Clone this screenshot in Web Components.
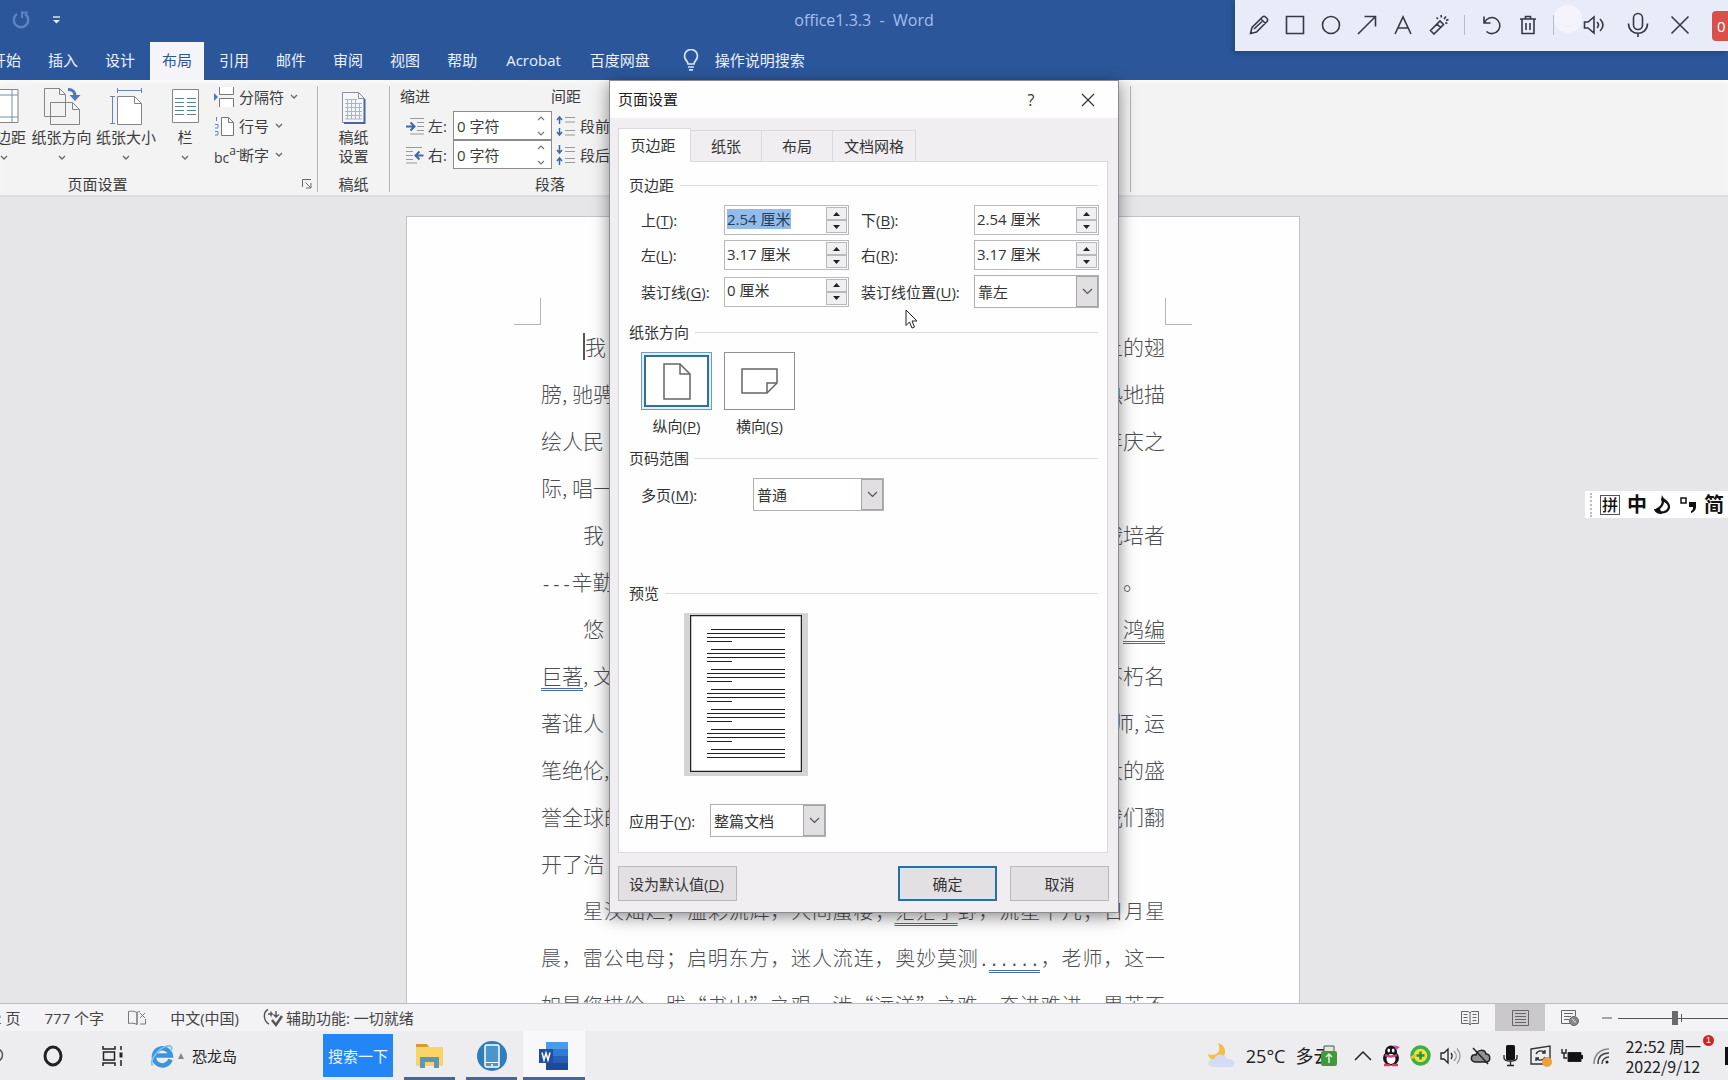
<!DOCTYPE html>
<html lang="zh-CN">
<head>
<meta charset="utf-8">
<title>office1.3.3 - Word</title>
<style>
  html, body { height: 100%; margin: 0; }
  body {
    overflow: hidden;
    font: 15px/20px "Open Sans", "Noto Sans CJK SC", sans-serif;
    color: #3c3c3c;
    background: #e6e6e8;
  }
</style>
</head>
<body>
<word-app></word-app>
<script>
const BASE = `
  *, *::before, *::after { box-sizing: border-box; }
  button, input, select { font: inherit; color: inherit; margin: 0; padding: 0; border: 0; background: none; border-radius: 0; }
  a { color: inherit; text-decoration: none; }
  svg { display: block; flex: none; fill: none; }
  :host { display: block; }
`;
function define(name, css, html, ready) {
  customElements.define(name, class extends HTMLElement {
    connectedCallback() {
      if (this.shadowRoot) return;
      const root = this.attachShadow({ mode: 'open' });
      const body = typeof html === 'function' ? html(this) : html;
      root.innerHTML = `<style>${BASE}${css}</style>${body}`;
      if (ready) ready(this, root);
    }
  });
}
const attr = (el, n, d = '') => el.getAttribute(n) ?? d;
const accel = el => attr(el, 'key') ? `${attr(el, 'label')}(<u>${attr(el, 'key')}</u>)` : attr(el, 'label');
const chevron = `<svg width="8" height="6" viewBox="0 0 8 6" stroke="#666" stroke-width="1.3"><path d="M1 1l3 3 3-3"/></svg>`;

/* ---------- title bar ---------- */
define('title-bar', `
  :host { height: 42px; padding-bottom: 2px; background: #2b579a; color: #a6bdf0; display: grid; grid-template-columns: 1fr auto 1fr; align-items: center; }
  .quick { display: flex; align-items: center; gap: 22px; padding-left: 11px; }
  h1 { font: inherit; font-size: 16px; margin: 0; white-space: pre; }
`, `
  <div class="quick">
    <button aria-label="撤消"><svg width="20" height="20" viewBox="0 0 20 20" stroke="#5f84c4" stroke-width="2.4"><path d="M6 4a7.200 7.200 0 1 0 8 0"/><path d="M11 8V2.500h6" stroke-width="2"/></svg></button>
    <button aria-label="自定义快速访问工具栏"><svg width="7" height="8" viewBox="0 0 7 8"><path d="M0 1h7" stroke="#e8eefc" stroke-width="1.4"/><path d="M0 4h7L3.500 7.500z" fill="#e8eefc"/></svg></button>
  </div>
  <h1>office1.3.3  -  Word</h1>
  <div></div>
`);

define('ribbon-tabs', `
  :host { height: 38px; background: #2b579a; color: #eaf1ff; }
  nav { display: flex; gap: 3px; height: 100%; margin-left: -21px; }
  a { display: flex; align-items: center; padding: 0 12px 2px; white-space: nowrap; }
  a.on { background: #f5f4f8; color: #2b579a; }
  a.wide { padding: 0 14px 2px; }
  a.tell { padding-left: 18px; gap: 16px; }
`, `
  <nav>
    <a href="#">开始</a><a href="#">插入</a><a href="#">设计</a><a href="#" class="on">布局</a><a href="#">引用</a>
    <a href="#">邮件</a><a href="#">审阅</a><a href="#">视图</a><a href="#">帮助</a><a href="#" class="wide">Acrobat</a><a href="#">百度网盘</a>
    <a href="#" class="tell"><svg width="16" height="22" viewBox="0 0 16 22" stroke="#d8e6ff" stroke-width="1.700"><path d="M5 15c0-3-3.500-4-3.500-8a6.500 6.500 0 0 1 13 0c0 4-3.500 5-3.500 8z"/><path d="M5 18h6M6 20.800h4"/></svg>操作说明搜索</a>
  </nav>
`);

/* ---------- ribbon ---------- */
const ICONS = {
  margins: `<svg width="37" height="38" viewBox="0 0 37 38"><path d="M5 2.500h28v33H5z" fill="#fff" stroke="#858585"/><path d="M11 2v34M27 2v34M5 8h28M5 30h28" stroke="#6f8fb8"/></svg>`,
  orient: `<svg width="38" height="38" viewBox="0 0 38 38" fill="#fff" stroke="#858585"><path d="M1.500 1.500h15l6 6v22h-21z"/><path d="M16.500 1.500v6h6"/><path d="M7.500 15.500h22l7 7v15h-29z"/><path d="M29.500 15.500v7h7"/><path d="M25 2.500c5 0 7 2 7 7" fill="none" stroke="#4f79b5" stroke-width="3"/><path d="M26.500 8h11L32 14z" fill="#4f79b5" stroke="none"/></svg>`,
  size: `<svg width="34" height="38" viewBox="0 0 34 38"><path d="M8.500 9.500h17l7 7v21h-24z" fill="#fff" stroke="#858585"/><path d="M25.500 9.500v7h7" stroke="#858585"/><path d="M8.500 3.500h24M8.500 1v5M32.500 1v5M3.500 9.500v27M1 9.500h5M1 36.500h5" stroke="#6286bd"/></svg>`,
  columns: `<svg width="27" height="38" viewBox="0 0 27 38"><path d="M.5 2.500h26v33H.5z" fill="#fff" stroke="#858585"/><path d="M3 11.500h9M3 15.500h9M3 19.500h9M3 23.500h9M3 27.500h9M15 11.500h9M15 15.500h9M15 19.500h9M15 23.500h9M15 27.500h9" stroke="#5b8294"/></svg>`,
  breaks: `<svg width="21" height="20" viewBox="0 0 21 20"><path d="M5.500 0v7.500h14V0M5.500 20v-8.500h14V20" fill="#fff" stroke="#777"/><path d="M0 6v8l4-4z" fill="#4f79b5"/></svg>`,
  lines: `<svg width="21" height="20" viewBox="0 0 21 20"><path d="M7.500 1.500h7l5 5v13h-12z" fill="#fff" stroke="#777"/><path d="M14.500 1.500v5h5" stroke="#777"/><path d="M2.500 1v4M1 8.500h3v3M1 12h3M1 15.500h3v3.500H1" stroke="#6286bd"/></svg>`,
  manuscript: `<svg width="26" height="34" viewBox="0 0 26 34"><path d="M1.500 1.500h16l6 6v24h-22z" fill="#f5f7fd" stroke="#8a8f9c"/><path d="M23.500 8v24H3" stroke="#4a64ac" stroke-width="2"/><path d="M17.500 1.500v6h6" stroke="#8a8f9c"/><path d="M4 8.500h12M4 12.500h17M4 16.500h17M4 20.500h17M4 24.500h17M4 28h17M6.500 8v20M10.500 8v20M14.500 8v20M18.500 12v16" stroke="#a9b3cc"/></svg>`,
  indL: `<svg width="19" height="18" viewBox="0 0 19 18"><path d="M5 1.500h14M12 5.500h7M12 9.500h7M12 13.500h7M5 17h14" stroke="#999"/><path d="M1 9.500h8M5.500 5.500l4 4-4 4" stroke="#41679f" stroke-width="2"/></svg>`,
  indR: `<svg width="19" height="18" viewBox="0 0 19 18"><path d="M1 1.500h16M1 5.500h7M1 9.500h7M1 13.500h7M1 17h11" stroke="#999"/><path d="M18.500 9.500h-8M14.500 5.500l-4 4 4 4" stroke="#41679f" stroke-width="2"/></svg>`,
  spB: `<svg width="20" height="22" viewBox="0 0 20 22"><path d="M9 2.500h10M9 7h10M9 15.500h10M9 20h10" stroke="#999" stroke-width="1.200"/><path d="M3.500 9V2M1 5l2.500-3L6 5M3.500 13v7M1 17l2.500 3L6 17" stroke="#41679f" stroke-width="1.500"/></svg>`,
  spA: `<svg width="20" height="22" viewBox="0 0 20 22"><path d="M9 3.500h10M9 7.500h10M9 14.500h10M9 18.500h10" stroke="#999" stroke-width="1.200"/><path d="M3.500 1v8M1 6l2.500 3L6 6M3.500 21v-7M1 17l2.500-3L6 17" stroke="#41679f" stroke-width="1.500"/></svg>`
};
define('big-button', `
  button { display: flex; flex-direction: column; align-items: center; white-space: nowrap; width: 100%; }
  span { margin-top: 2px; }
  .c { height: 18px; display: flex; align-items: center; }
`, el => `<button>${ICONS[attr(el, 'icon')]}<span>${attr(el, 'label')}</span><span class="c">${chevron}</span></button>`);

define('small-button', `
  button { display: flex; align-items: center; height: 29px; white-space: nowrap; }
  .i { width: 25px; display: flex; }
  .t { margin-right: 6px; }
  .ab { display: flex; line-height: 14px; font-size: 14px; }
  .ab span { padding-top: 7px; }
  .ab b { font-weight: 400; font-size: 12px; }
`, el => `<button><span class="i">${attr(el, 'icon') === 'hyphen' ? '<span class="ab"><span>bc</span><b>a-</b></span>' : ICONS[attr(el, 'icon')]}</span><span class="t">${attr(el, 'label')}</span>${chevron}</button>`);

define('indent-field', `
  label { display: flex; align-items: center; height: 29px; gap: 4px; }
  .box { display: flex; align-items: center; width: 99px; height: 29px; border: 1px solid #8d8d8d; background: #fff; margin-left: 2px; padding-right: 6px; }
  input { flex: 1; min-width: 0; padding-left: 3px; }
`, el => `<label>${ICONS[attr(el, 'icon')]}<span>${attr(el, 'label')}:</span><span class="box"><input value="0 字符">
  <svg width="8" height="22" viewBox="0 0 8 22" stroke="#777" stroke-width="1.200"><path d="M1 5l3-3 3 3M1 17l3 3 3-3"/></svg></span></label>`);

define('ribbon-group', `
  :host { display: grid; grid-template-rows: minmax(0, 1fr) 16px; border-right: 1px solid #b4b4b6; height: 106px; }
  footer { display: grid; grid-template-columns: 1fr auto 1fr; align-items: center; line-height: 16px; }
  footer span { grid-column: 2; }
  footer button { justify-self: end; margin-right: 5px; }
`, el => `<slot></slot><footer><span>${attr(el, 'label')}</span>${el.hasAttribute('launcher') ? `<button aria-label="${attr(el, 'label')}"><svg width="10" height="10" viewBox="0 0 10 10" stroke="#666"><path d="M.5 8V.5H9M3.500 3.500l5 5M9 4v5H4"/></svg></button>` : ''}</footer>`);

define('ribbon-bar', `
  :host { display: flex; height: 117px; padding-top: 6px; background: #f3f3f4; border-bottom: 2px solid #dedee0; overflow: hidden; box-shadow: inset 0 4px 4px -2px #fdfbff; }
  ribbon-group { flex: none; }
  .first { width: 440px; margin-left: -122px; }
  .row { display: flex; padding-left: 98px; }
  .row big-button { padding-top: 1px; }
  .w1 { width: 55px; } .w2 { width: 61px; } .w3 { width: 68px; } .w4 { width: 50px; }
  .stack { padding-left: 4px; display: grid; align-content: start; margin-top: -4px; }
  .ms { width: 72px; }
  .ms button { display: grid; align-content: start; justify-items: center; line-height: 19px; padding-top: 5px; gap: 3px; width: 100%; }
  .para { width: 741px; }
  .cols { display: flex; padding-left: 10px; gap: 4px; align-items: start; }
  .fields { padding-left: 5px; }
  .sp { display: flex; align-items: center; gap: 4px; height: 29px; white-space: nowrap; }
  h2 { font: inherit; margin: 0 0 0 -5px; height: 25px; line-height: 21px; }
`, `
  <ribbon-group class="first" label="页面设置" launcher>
    <div class="row">
      <big-button class="w1" icon="margins" label="页边距"></big-button>
      <big-button class="w2" icon="orient" label="纸张方向"></big-button>
      <big-button class="w3" icon="size" label="纸张大小"></big-button>
      <big-button class="w4" icon="columns" label="栏"></big-button>
      <div class="stack">
        <small-button icon="breaks" label="分隔符"></small-button>
        <small-button icon="lines" label="行号"></small-button>
        <small-button icon="hyphen" label="断字"></small-button>
      </div>
    </div>
  </ribbon-group>
  <ribbon-group class="ms" label="稿纸"><button>${ICONS.manuscript}<span>稿纸<br>设置</span></button></ribbon-group>
  <ribbon-group class="para" label="">
    <div class="cols">
      <div class="fields"><h2>缩进</h2><indent-field icon="indL" label="左"></indent-field><indent-field icon="indR" label="右"></indent-field></div>
      <div><h2>间距</h2><div class="sp">${ICONS.spB}段前:</div><div class="sp">${ICONS.spA}段后:</div></div>
    </div>
  </ribbon-group>
`, (el, root) => {
  root.querySelector('.para').shadowRoot.querySelector('footer').innerHTML = '<span style="grid-column:1;padding-left:145px">段落</span>';
});

/* ---------- screen annotation toolbar ---------- */
define('annotate-bar', `
  :host { position: absolute; top: 0; right: 0; display: flex; align-items: center; height: 51px; width: 493px; padding-left: 12px; background: #e8ebf8; box-shadow: -2px 2px 5px rgba(20,40,80,.4); overflow: hidden; }
  button, i { flex: none; display: flex; justify-content: center; width: 36px; margin-bottom: 2px; }
  button:first-child, .n { width: 24px; }
  svg { stroke: #353846; stroke-width: 1.600; }
  i { width: 1px; height: 20px; background: #b9bccb; margin-left: 7px; }
  .halo { width: 28px; height: 28px; border-radius: 50%; background: #f4f5fc; margin: 0 0 14px; }
  .rec { background: #d9504b; color: #fff; width: 40px; height: 30px; align-items: center; justify-content: flex-start; border-radius: 4px; padding-left: 5px; margin: 0; }
  .w { width: 42px; } .g { margin-left: 11px; }
`, `
  <button aria-label="画笔" class="n"><svg width="20" height="20" viewBox="0 0 20 20"><path d="M1.500 18.500l1.500-6L13.500 2c1-1 2-1 3 0l1.500 1.500c1 1 .8 2 0 3L7.500 17zM12 4l4.500 4.500M5 14L13 6.500"/></svg></button>
  <button aria-label="矩形" style="margin-left:6px"><svg width="20" height="20" viewBox="0 0 20 20"><path d="M1.500 1.500h17v17h-17z"/></svg></button>
  <button aria-label="圆"><svg width="20" height="20" viewBox="0 0 20 20"><circle cx="10" cy="10" r="8.500"/></svg></button>
  <button aria-label="箭头"><svg width="20" height="20" viewBox="0 0 20 20"><path d="M1 19L18 2M7.500 1.500h11v10"/></svg></button>
  <button aria-label="文字"><svg width="20" height="20" viewBox="0 0 20 20"><path d="M2 19L10 2l8 17M5 13h10"/></svg></button>
  <button aria-label="荧光笔"><svg width="20" height="20" viewBox="0 0 20 20"><path d="M1.500 15.500L11 6l3.500 3.500L5 19zM8 9l3.500 3.500M12 0l.5 2.500M17 1.500l-2 2.500M18.500 8h-2.500M19.500 4.500L17 5.500M7.500 2.500L9 4"/></svg></button>
  <i></i>
  <button aria-label="撤销" style="margin-left:9px"><svg width="20" height="20" viewBox="0 0 20 20"><path d="M2 1.500V8h6.500M2.500 7.500a8 8 0 1 1 2 9"/></svg></button>
  <button aria-label="清空"><svg width="18" height="20" viewBox="0 0 18 20"><path d="M1 4h16M6.500 3.500v-2h5v2M3 4v14.500h12V4M7 8v7M11 8v7"/></svg></button>
  <i></i><i class="halo"></i>
  <button aria-label="声音" class="n"><svg width="22" height="22" viewBox="0 0 22 22"><path d="M1.500 8v6H5l6 5V3L5 8zM14 8c2 2 2 4 0 6M17 5c4 4 4 8 0 12"/></svg></button>
  <button aria-label="麦克风" class="w" style="margin-left:11px"><svg width="22" height="26" viewBox="0 0 22 26"><rect x="6.500" y="1.500" width="9" height="16" rx="4.500"/><path d="M1.500 11.500c0 13 19 13 19 0M11 21.500V25"/></svg></button>
  <button aria-label="关闭" class="w"><svg width="20" height="20" viewBox="0 0 20 20"><path d="M1.500 1.500l17 17M18.500 1.500l-17 17"/></svg></button>
  <button class="rec g">0</button>
`);

/* ---------- document ---------- */
define('doc-line', `
  :host { display: flex; justify-content: space-between; height: 47px; line-height: 47px; font-size: 21px; white-space: nowrap; }
  :host([indent]) { padding-left: 42px; }
  :host([full]) { display: block; font-size: 20px; text-align: justify; text-align-last: justify; }
`, `<slot></slot>`);
define('doc-page', `
  :host { width: 894px; max-width: 100%; margin: 19px auto 0; padding: 81px 134px 0; background: #fefefe; border: 1px solid #c3c3c5; color: #4e4e52; font-weight: 300; font-family: "Noto Sans CJK SC", sans-serif; flex: none; }
  .marks { display: flex; justify-content: space-between; margin: 0 -27px -2px; height: 27px; }
  .marks i { width: 27px; border-bottom: 1px solid #b5b5b5; border-right: 1px solid #b5b5b5; }
  .marks i + i { border-right: 0; border-left: 1px solid #b5b5b5; }
  .d { text-decoration: underline double #4a6ca8 1px; text-underline-offset: 4px; }
  .m { font-family: "Liberation Mono", monospace; font-size: 17px; }
  .caret { border-left: 2px solid #555; padding: 3px 0; line-height: 21px; align-self: center; }
`, `
  <div class="marks"><i></i><i></i></div>
  <doc-line indent><span class="caret">我</span><span>上的翅</span></doc-line>
  <doc-line><span>膀, 驰骋</span><span>热地描</span></doc-line>
  <doc-line><span>绘人民</span><span>年庆之</span></doc-line>
  <doc-line><span>际, 唱一</span></doc-line>
  <doc-line indent><span>我</span><span>栽培者</span></doc-line>
  <doc-line><span><span class="m">---</span>辛勤</span><span>。&emsp;</span></doc-line>
  <doc-line indent><span>悠</span><span class="d">鸿编</span></doc-line>
  <doc-line><span><span class="d">巨著</span>, 文</span><span>不朽名</span></doc-line>
  <doc-line><span>著谁人</span><span>师, 运</span></doc-line>
  <doc-line><span>笔绝伦,</span><span>大的盛</span></doc-line>
  <doc-line><span>誉全球的</span><span>我们翻</span></doc-line>
  <doc-line><span>开了浩</span></doc-line>
  <doc-line indent full>星汉灿烂，溢彩流辉，人间蜃楼；<span class="d">茫茫宇</span>野，流星下凡；日月星</doc-line>
  <doc-line full>晨，雷公电母；启明东方，迷人流连，奥妙莫测<span class="m">.<span class="d">.....</span></span>，老师，这一</doc-line>
  <doc-line full>如是您描绘，跋“书山”之艰，涉“远洋”之难，奋进难进，累苦不</doc-line>
`);

/* ---------- dialog ---------- */
define('group-head', `
  :host { display: flex; align-items: center; gap: 6px; height: 24px; }
  :host::after { content: ""; flex: 1; height: 1px; background: #dcdcdf; }
`, `<slot></slot>`);
const FIELD = `
  label { white-space: nowrap; width: var(--label, 83px); flex: none; }
  u { text-underline-offset: 2px; }
  :host { display: flex; align-items: center; }
`;
define('spin-field', FIELD + `
  .box { display: flex; height: 30px; width: 125px; border: 1px solid #b9b9bc; background: #fff; padding: 1px; }
  input { flex: 1; min-width: 0; padding: 0 0 3px 1px; outline: 0; color: #333; }
  input::selection { background: #93bde8; color: #24405e; }
  .btns { display: grid; width: 21px; }
  .btns button { display: flex; align-items: center; justify-content: center; background: #f0eff1; border: 1px solid #b9b9bc; }
`, el => `<label for="f">${accel(el)}:</label><div class="box"><input id="f" value="${attr(el, 'value')}">
  <div class="btns"><button aria-label="增加"><svg width="7" height="4" viewBox="0 0 7 4"><path d="M0 4L3.500 0 7 4z" fill="#222"/></svg></button>
  <button aria-label="减少"><svg width="7" height="4" viewBox="0 0 7 4"><path d="M0 0h7L3.500 4z" fill="#222"/></svg></button></div></div>`,
(el, root) => { if (el.hasAttribute('selected')) { const i = root.querySelector('input'); i.focus(); i.select(); } });
define('combo-field', FIELD + `
  .box { display: grid; height: 33px; width: var(--box, 125px); border: 1px solid #b0b0b3; background: #fff; }
  select { grid-area: 1/1; appearance: none; padding: 0 26px 0 3px; outline: 0; color: #333; }
  .arrow { grid-area: 1/1; justify-self: end; width: 22px; display: flex; align-items: center; justify-content: center; background: #e1dfe2; border: 1px solid #a5a5a8; pointer-events: none; }
`, el => `<label for="f">${accel(el)}:</label><div class="box"><select id="f"><option>${attr(el, 'value')}</option></select>
  <span class="arrow"><svg width="11" height="7" viewBox="0 0 11 7" stroke="#555" stroke-width="1.200"><path d="M1 1l4.500 4.500L10 1"/></svg></span></div>`);
define('orient-option', `
  :host { width: 71px; }
  button { display: grid; justify-items: center; gap: 4px; width: 100%; line-height: 24px; }
  .pic { width: 71px; height: 58px; display: flex; align-items: center; justify-content: center; border: 1px solid #8f8f93; background: #fff; }
  :host([on]) .pic { border-color: #6f9db8; box-shadow: inset 0 0 0 2px #d9f2ff, inset 0 0 0 4px #33708f; }
`, el => `<button><span class="pic">${el.hasAttribute('landscape')
  ? '<svg width="37" height="26" viewBox="0 0 37 26" fill="#f7f7f7" stroke="#666" stroke-width="1.500"><path d="M1 1h35v14L26 25H1z"/><path d="M26 25V15h10"/></svg>'
  : '<svg width="28" height="37" viewBox="0 0 28 37" fill="#f7f7f7" stroke="#666" stroke-width="1.500"><path d="M1 1h16l10 10v25H1z"/><path d="M17 1v10h10"/></svg>'}</span><span>${accel(el)}</span></button>`);
define('page-preview', `
  :host { width: 124px; height: 163px; background: #d4d4d6; padding: 2px 6px; }
`, () => {
  let d = '';
  for (let g = 0; g < 7; g++) {
    const y = 14.5 + g * 20;
    d += `M21 ${y}h74M17 ${y + 4}h78M17 ${y + 8}h78`;
    if (g < 6) d += `M17 ${y + 12}h25`;
  }
  return `<svg width="112" height="157" viewBox="0 0 112 157"><path d="M.5.500h111v156H.5z" fill="#fff" stroke="#222" stroke-width="1.500"/><path d="${d}" stroke="#222"/></svg>`;
});

define('page-setup-dialog', `
  :host { position: absolute; top: 80px; left: 0; right: 0; margin: 0 auto; width: 510px; background: #f0eef1; border: 1px solid #8c8c90; box-shadow: 0 4px 16px rgba(0,0,0,.45); color: #333; }
  header { display: flex; align-items: center; height: 37px; background: #fefefe; padding: 0 8px; }
  header b { font-weight: 400; flex: 1; color: #222; padding-bottom: 1px; }
  header button { width: 44px; height: 36px; display: flex; align-items: center; justify-content: center; font-size: 16px; margin-left: 13px; }
  main { padding: 10px 9px 11px 8px; }
  .tabs { display: flex; align-items: end; height: 33px; }
  .tabs button { height: 31px; border: 1px solid #dad9dc; border-width: 1px 1px 0 0; }
  .tabs .on { width: 73px; height: 34px; margin-bottom: -1px; background: #fefefe; border-left-width: 1px; padding: 0 3px 2px 0; position: relative; }
  .t1 { width: 71px; } .t2 { width: 71px; } .t3 { width: 83px; }
  section { background: #fefefe; border: 1px solid #dad9dc; padding: 11px 9px 15px 10px; margin-right: 1px; }
  .grid { display: grid; grid-template-columns: auto auto; justify-content: space-between; gap: 5px 12px; margin: 8px 0 12px; padding-left: 12px; }
  .r { --label: 113px; }
  .orient { display: flex; gap: 12px; margin: 8px 0; padding-left: 12px; }
  .multi { --label: 112px; --box: 131px; margin: 8px 0 70px; padding-left: 12px; }
  page-preview { margin: 8px 0 28px 55px; }
  .apply { --label: 81px; --box: 116px; }
  .foot { display: flex; gap: 13px; margin-top: 13px; }
  .foot button { width: 99px; height: 35px; background: #e2e0e3; border: 1px solid #b9b8bb; }
  .foot .def { width: 119px; margin-right: auto; padding-right: 2px; }
  .foot .ok { border: 2px solid #2f6f9f; box-shadow: inset 0 0 0 1px #cfeaff; }
`, `
  <header><b>页面设置</b><button aria-label="帮助">?</button><button aria-label="关闭"><svg width="14" height="14" viewBox="0 0 14 14" stroke="#333" stroke-width="1.200"><path d="M1 1l12 12M13 1L1 13"/></svg></button></header>
  <main>
    <div class="tabs"><button class="on">页边距</button><button class="t1">纸张</button><button class="t2">布局</button><button class="t3">文档网格</button></div>
    <section>
      <group-head>页边距</group-head>
      <div class="grid">
        <spin-field label="上" key="T" value="2.54 厘米" selected></spin-field>
        <spin-field class="r" label="下" key="B" value="2.54 厘米"></spin-field>
        <spin-field label="左" key="L" value="3.17 厘米"></spin-field>
        <spin-field class="r" label="右" key="R" value="3.17 厘米"></spin-field>
        <spin-field label="装订线" key="G" value="0 厘米"></spin-field>
        <combo-field class="r" label="装订线位置" key="U" value="靠左"></combo-field>
      </div>
      <group-head>纸张方向</group-head>
      <div class="orient"><orient-option on label="纵向" key="P"></orient-option><orient-option landscape label="横向" key="S"></orient-option></div>
      <group-head>页码范围</group-head>
      <combo-field class="multi" label="多页" key="M" value="普通"></combo-field>
      <group-head>预览</group-head>
      <page-preview></page-preview>
      <combo-field class="apply" label="应用于" key="Y" value="整篇文档"></combo-field>
    </section>
    <div class="foot"><button class="def">设为默认值(<u>D</u>)</button><button class="ok">确定</button><button>取消</button></div>
  </main>
`);

/* ---------- floating pieces ---------- */
define('ime-bar', `
  :host { position: absolute; right: 0; top: 491px; width: 143px; height: 27px; background: #fff; display: flex; align-items: center; gap: 7px; padding-left: 5px; color: #111; font-weight: 700; font-size: 20px; line-height: 26px; }
  i { width: 3px; height: 24px; border-left: 2px dotted #bbb; }
  .pin { border: 1px solid #555; font-size: 16px; line-height: 18px; width: 20px; height: 20px; text-align: center; font-weight: 500; }
`, `<i></i><span class="pin">拼</span><span>中</span>
  <svg width="18" height="20" viewBox="0 0 18 20"><path d="M8 4c2 4 0 8-6 11 4 4 12 3 13-3 0-3-2-5-5-7" fill="#fff" stroke="#111" stroke-width="2.200"/><path d="M8 0c1 4 5 4 6 9l-4-2-3-2zM0 14h6l2 5c-4 0-7-1-8-5z" fill="#111"/></svg>
  <svg width="18" height="18" viewBox="0 0 18 18"><rect x="2" y="2" width="5" height="5" stroke="#111" stroke-width="1.500"/><path d="M10 6h7v5c0 3-2 5-5 6v-2c2-1 2-2 2-4h-4z" fill="#111"/></svg><span>简</span>`);
define('mouse-pointer', `:host { position: absolute; left: 905px; top: 309px; }`,
  `<svg width="13" height="20" viewBox="0 0 13 20"><path d="M1 1v15.500l3.500-3.500 2.500 6 2.500-1-2.500-6h5z" fill="#fff" stroke="#222"/></svg>`);

/* ---------- status bar ---------- */
define('status-bar', `
  :host { display: flex; align-items: center; height: 27px; background: #f3f2f4; box-shadow: 0 -1px 0 #bcbcc0; white-space: nowrap; flex: none; position: relative; color: #444; }
  .l { display: flex; align-items: center; gap: 24px; margin-left: -7px; flex: 1; }
  .a { display: flex; align-items: center; gap: 3px; }
  button { display: flex; align-items: center; justify-content: center; width: 50px; height: 27px; }
  .on { background: #cac8cb; }
  .zoom { display: flex; align-items: center; width: 133px; overflow: hidden; }
  input { appearance: none; width: 138px; height: 16px; flex: none; margin-left: 6px; background: linear-gradient(#555, #555) 0 8px/100% 1px no-repeat, linear-gradient(#555, #555) 63px 4px/1px 8px no-repeat; }
  input::-webkit-slider-thumb { appearance: none; width: 6px; height: 14px; background: #6a6a6c; }
`, `
  <div class="l"><span>2 页</span><span>777 个字</span>
    <svg width="18" height="16" viewBox="0 0 18 16" stroke="#777"><path d="M9 2.500C6 .8 3 1 .5 1.500v12c3-.5 6-.5 8.500 1zM9 14.500V2.500c1-.8 2-1 3-1M12 14h5.500V9M12 3l5 5M17 3l-5 5"/></svg>
    <span>中文(中国)</span>
    <span class="a"><svg width="20" height="20" viewBox="0 0 20 20" stroke="#555" stroke-width="1.400"><path d="M5 1.500C0 4 0 13 6 16M8 3.500v5M5 6h5M13 3v6M10.500 6.500l2.500 2.500 3-2.500"/><path d="M9 12l4 5 6-9" stroke-width="2.500"/></svg>辅助功能: 一切就绪</span></div>
  <button aria-label="阅读视图"><svg width="18" height="16" viewBox="0 0 18 16" stroke="#666"><path d="M.5 1.500h7L9 3l1.500-1.500h7v12h-7L9 15l-1.500-1.500h-7zM9 3v12M2.500 4.500h4M2.500 7.500h4M2.500 10.500h4M11.500 4.500h4M11.500 7.500h4M11.500 10.500h4"/></svg></button>
  <button class="on" aria-label="页面视图"><svg width="17" height="16" viewBox="0 0 17 16" stroke="#666"><path d="M.5.500h16v15H.5zM3 3.500h11M3 6.500h11M3 9.500h11M3 12.500h11"/></svg></button>
  <button aria-label="Web 版式"><svg width="18" height="16" viewBox="0 0 18 16" stroke="#666"><path d="M9 13.500H.5V.5h14V6M3 3.500h9M3 6.500h7M3 9.500h5"/><circle cx="13" cy="11" r="4.500" fill="#888"/><path d="M11 9c2 0 1 3 4 3" stroke="#eee"/></svg></button>
  <div class="zoom"><svg width="10" height="2" viewBox="0 0 10 2" stroke="#555" style="margin-left:7px"><path d="M0 1h10"/></svg><input type="range" aria-label="显示比例" min="0" max="100" value="41"></div>
`);

/* ---------- task bar ---------- */
define('task-bar', `
  :host { display: flex; align-items: center; height: 49px; background: #ededf0; color: #222; white-space: nowrap; flex: none; overflow: hidden; }
  .l, .r { display: flex; align-items: center; height: 100%; }
  .l { flex: 1; }
  button, a { display: flex; align-items: center; justify-content: center; flex: none; }
  .ie { gap: 4px; margin-left: 27px; } .ie span { margin-left: 4px; }
  .go { width: 70px; height: 43px; background: #2486f6; color: #eaf5ff; margin: 0 11px 0 86px; }
  .app { width: 51px; height: 49px; border-bottom: 3px solid #42689b; margin-right: 11px; padding-top: 3px; }
  .app.on { width: 62px; background: #f8f8fb; margin-left: -5px; }
  .wt { font-size: 18px; gap: 10px; }
  .usb { margin-left: -11px; }
  .tray { display: flex; align-items: center; gap: 9px; margin-left: 16px; }
  time { font-size: 16px; line-height: 20px; margin-left: 15px; font-family: "Noto Sans CJK SC", sans-serif; }
  .dot { width: 11px; height: 11px; border-radius: 50%; background: #d02328; color: #fff; font: 9px/11px "Liberation Sans", sans-serif; text-align: center; align-self: start; margin: 4px 11px 0 2px; }
  .nt { width: 3px; height: 18px; background: #111; }
`, `
  <div class="l">
    <svg width="4" height="16" viewBox="0 0 4 16" stroke="#555" stroke-width="1.500"><circle cx="-4" cy="7" r="6.500"/></svg>
    <button aria-label="Cortana" style="margin-left:39px"><svg width="20" height="22" viewBox="0 0 20 22" stroke="#222" stroke-width="3"><ellipse cx="10" cy="11" rx="8" ry="9"/></svg></button>
    <button aria-label="任务视图" style="margin-left:39px"><svg width="21" height="20" viewBox="0 0 21 20" stroke="#222" stroke-width="1.500"><path d="M1 0v3h12V0M1 20v-3h12v3M1.500 6h11v8h-11zM19 0v4M19 14v6"/><path d="M19 6.500v5" stroke-width="3"/></svg></button>
    <button class="ie"><svg width="24" height="24" viewBox="0 0 24 24"><path d="M20.500 15.500A8.500 8.500 0 1 1 20.800 11.500H6" stroke="#3b95dd" stroke-width="4.500"/><path d="M2.500 21.500C-1 16 9 4 17 2c5-1 5 2 4.500 4" stroke="#7cc0ee" stroke-width="1.800"/></svg><svg width="6" height="6" viewBox="0 0 6 6"><path d="M3 0l3 6H0z" fill="#888"/></svg><span>恐龙岛</span></button>
    <button class="go">搜索一下</button>
    <button class="app" aria-label="文件资源管理器"><svg width="30" height="26" viewBox="0 0 30 26"><path d="M1 1h11l2 3h-13z" fill="#d99a35"/><path d="M1 4h27v19H1z" fill="#f9d567"/><path d="M5 25V14h19v11h-5v-6h-9v6z" fill="#5d97b5"/></svg></button>
    <button class="app" aria-label="手机助手"><svg width="30" height="30" viewBox="0 0 30 30"><circle cx="15" cy="15" r="15" fill="#2f7dbd"/><rect x="8" y="4" width="14" height="22" rx="2" stroke="#fff" stroke-width="1.500" fill="#4e94cc"/><path d="M8 21.500h14" stroke="#fff"/><circle cx="15" cy="24" r="1" fill="#fff"/></svg></button>
    <button class="app on" aria-label="Word"><svg width="30" height="28" viewBox="0 0 30 28"><path d="M7 0h22v7H7z" fill="#4a9be8"/><path d="M7 7h22v7H7z" fill="#2f7bd3"/><path d="M7 14h22v7H7z" fill="#245fb8"/><path d="M7 21h22v7H7z" fill="#1c4a98"/><rect y="7" width="14" height="14" fill="#1f4f9e"/><path d="M3 10.500l2 7.500 2-7 2 7 2-7.500" stroke="#fff" stroke-width="1.500"/></svg></button>
  </div>
  <div class="r">
    <a href="#" class="wt"><svg width="30" height="28" viewBox="0 0 30 28"><path d="M12 1c4 9-2 14-10 11 1 8 15 9 17-1 1-5-3-9-7-10z" fill="#f3bd4c"/><path d="M7 25c-8-1-5-9 1-8 2-6 11-6 13 0 9-1 10 8 3 8z" fill="#d3dcf2"/></svg><span>25°C</span><span>多云</span></a>
    <svg class="usb" width="18" height="22" viewBox="0 0 18 22"><path d="M4 1h10v6H4z" fill="#dfe9df" stroke="#555"/><rect x="1" y="6" width="16" height="15" rx="2" fill="#3e9a3d"/><path d="M9 9v9M6 12l3-3 3 3" stroke="#dff5d8" stroke-width="1.500"/></svg>
    <div class="tray">
      <svg width="18" height="11" viewBox="0 0 18 11" stroke="#222" stroke-width="1.500"><path d="M1 10l8-8 8 8"/></svg>
      <svg width="20" height="22" viewBox="0 0 20 22"><ellipse cx="10" cy="13" rx="8" ry="7.500" fill="#151515"/><ellipse cx="10" cy="7" rx="6" ry="6.500" fill="#151515"/><ellipse cx="10" cy="14" rx="4.500" ry="5" fill="#fff"/><ellipse cx="7.800" cy="5.500" rx="1.300" ry="2" fill="#fff"/><ellipse cx="12.200" cy="5.500" rx="1.300" ry="2" fill="#fff"/><path d="M4 10c4 2 8 2 12 0" stroke="#d83a88" stroke-width="2.500"/><path d="M13 0l6 2-4 3z" fill="#d646b4"/><path d="M3 20h6M11 20h6" stroke="#d83a68" stroke-width="2.500"/></svg>
      <svg width="21" height="21" viewBox="0 0 21 21"><circle cx="10.500" cy="10.500" r="8.500" fill="#f0e23b" stroke="#3fae49" stroke-width="3.500"/><path d="M1 13l5-3" stroke="#f0c52b" stroke-width="3"/><path d="M10.500 6.500v8M6.500 10.500h8" stroke="#2f8f3c" stroke-width="2.500"/></svg>
      <svg width="21" height="18" viewBox="0 0 21 18" stroke="#222" stroke-width="1.300"><path d="M1 6v6h3l4 4V2L4 6zM11 6c1.500 2 1.500 4 0 6"/><path d="M14 4c3 3 3 7 0 10M17 1.500c4 5 4 10 0 15" stroke="#999"/></svg>
      <svg width="21" height="18" viewBox="0 0 21 18" stroke="#222" stroke-width="1.500"><path d="M5 15c-6-1-4-8 1-7 1-6 9-6 10-1 5 0 5 8 0 8z" fill="#909095"/><path d="M3 1l15 16"/></svg>
      <svg width="21" height="22" viewBox="0 0 21 22"><rect x="6" y="0" width="9" height="15" rx="1.500" fill="#111"/><path d="M4 10v3c0 4 13 4 13 0v-3M10.500 16v4M7 20.500h7" stroke="#222" stroke-width="1.300"/></svg>
      <svg width="22" height="22" viewBox="0 0 22 22"><path d="M1 4l19-3v18H1z" stroke="#333" stroke-width="1.400"/><path d="M6 9c2-4 7-4 9-1M15 5v3h-3M15 12c-2 4-7 4-9 1M6 16v-3h3" stroke="#333" stroke-width="1.400"/><circle cx="17" cy="17" r="5" fill="#e9a13b"/></svg>
      <svg width="22" height="16" viewBox="0 0 22 16"><path d="M7 4.500h13v9H7z" fill="#111" stroke="#222"/><path d="M20 7h2v4h-2z" fill="#111"/><path d="M1 1v4h4V1M3 5v5h3" stroke="#222" stroke-width="1.400"/></svg>
      <svg width="18" height="18" viewBox="0 0 18 18" stroke="#444" stroke-width="1.500"><path d="M2 17C2 8 8 2 17 2" stroke="#888"/><path d="M6 17C6 10 10 6 17 6M10 17c0-4 3-7 7-7"/><circle cx="15" cy="15" r="1.500" fill="#222" stroke="none"/></svg>
    </div>
    <time>22:52 周一<br>2022/9/12</time><span class="dot">1</span><span class="nt"></span>
  </div>
`);

define('word-app', `
  :host { display: flex; flex-direction: column; height: 100vh; position: relative; overflow: hidden; }
  title-bar, ribbon-tabs, ribbon-bar { flex: none; }
  .work { flex: 1; min-height: 0; overflow: hidden; display: flex; align-items: start; padding-right: 22px; background: #e6e6e8; }
`, `
  <title-bar></title-bar>
  <ribbon-tabs></ribbon-tabs>
  <ribbon-bar></ribbon-bar>
  <div class="work"><doc-page></doc-page></div>
  <status-bar></status-bar>
  <task-bar></task-bar>
  <annotate-bar></annotate-bar>
  <page-setup-dialog></page-setup-dialog>
  <ime-bar></ime-bar>
  <mouse-pointer></mouse-pointer>
`);
</script>
</body>
</html>
